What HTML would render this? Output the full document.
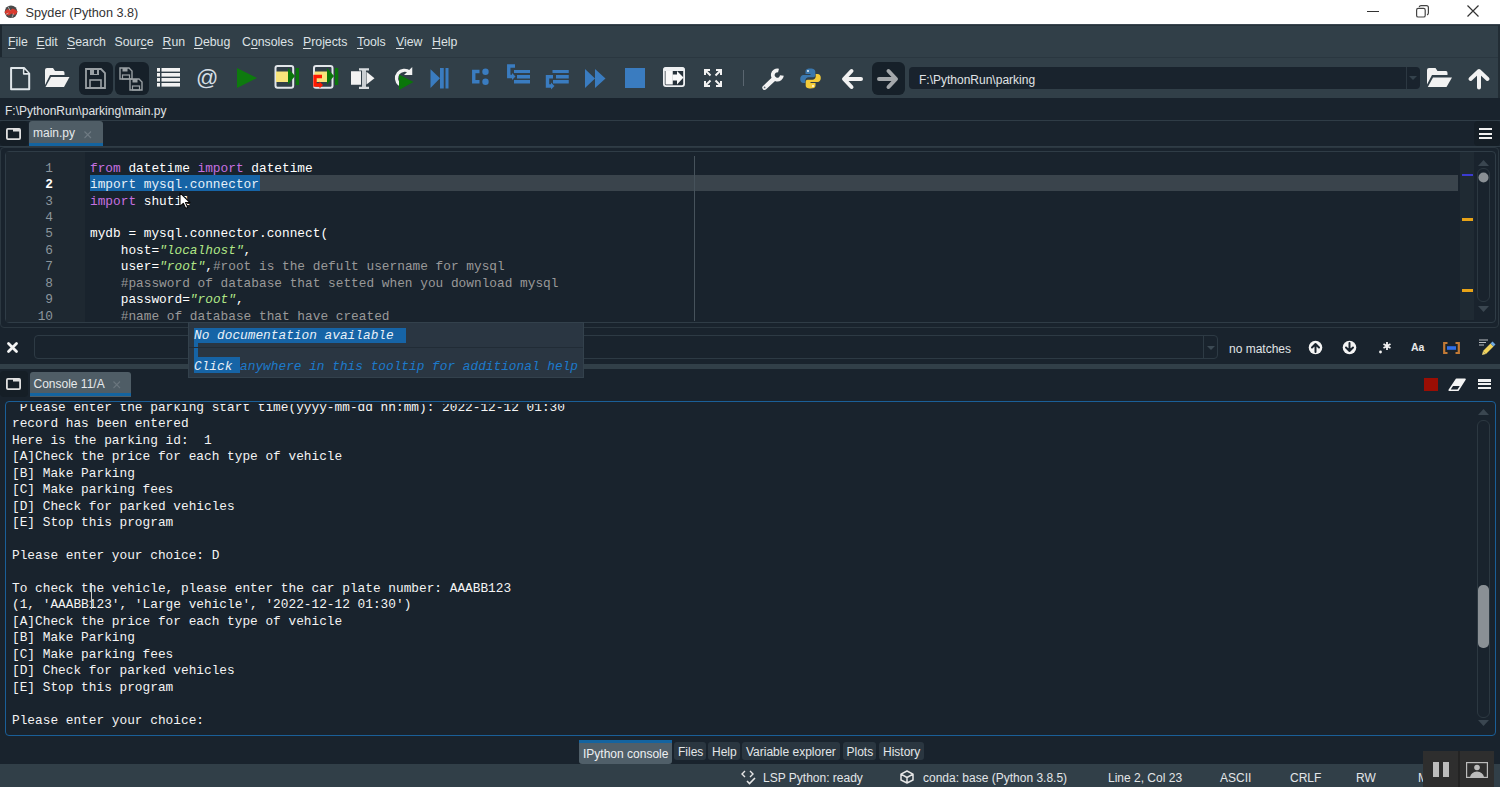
<!DOCTYPE html>
<html><head><meta charset="utf-8"><title>Spyder</title>
<style>
*{margin:0;padding:0;box-sizing:border-box}
html,body{width:1500px;height:787px;overflow:hidden;background:#19232D;font-family:"Liberation Sans",sans-serif;font-size:12px;color:#E8EAEC}
.a{position:absolute}
svg.a{overflow:visible}
.t{position:absolute;white-space:pre;line-height:1}
u{text-decoration:underline;text-underline-offset:1.5px;text-decoration-thickness:1px}
.kw{color:#C670E0}
.st{color:#B0E686;font-style:italic}
.cm{color:#999999}

</style></head><body>
<div class="a" style="left:0px;top:0px;width:1500px;height:25px;background:#fff"></div>
<div class="a" style="left:0px;top:24px;width:1500px;height:1px;background:#3a4650"></div>
<svg class="a" style="left:4px;top:4.5px" width="14" height="14" viewBox="0 0 14 14"><circle cx="7" cy="6.8" r="6.3" fill="#4a4a4a"/><path d="M0.5 7.5 Q1.5 4.5 4 4 L6 5.5 L8.5 3.5 Q12 4.5 13.6 6.5 Q12.5 9.5 10 10 L7.5 8.5 L5 10.5 Q2 10 0.5 7.5 Z" fill="#D93A2E"/><path d="M4 1.5 L6 5.5 M9.5 8.5 L8 12.5 M1.5 9.5 L4.5 8" stroke="#c8c8c8" stroke-width="0.7"/></svg>
<div class="t" style="left:25.5px;top:6.75px;font-size:12.7px;color:#333333;">Spyder (Python 3.8)</div>
<div class="a" style="left:1367px;top:11px;width:12px;height:1px;background:#333"></div>
<svg class="a" style="left:1416px;top:5px" width="13" height="13" viewBox="0 0 13 13"><rect x="0.6" y="3.4" width="8.6" height="8.6" rx="1.6" fill="none" stroke="#444" stroke-width="1.2"/><path d="M3.2 2.0 Q3.6 0.6 5 0.6 L10.4 0.6 Q12.4 0.6 12.4 2.6 L12.4 8 Q12.4 9.4 11 9.8" fill="none" stroke="#444" stroke-width="1.2"/></svg>
<svg class="a" style="left:1467px;top:5px" width="12" height="12" viewBox="0 0 12 12"><path d="M0.5 0.5 L11.5 11.5 M11.5 0.5 L0.5 11.5" stroke="#333" stroke-width="1.2"/></svg>
<div class="a" style="left:0px;top:25px;width:1500px;height:32px;background:#313F48"></div>
<div class="a" style="left:0px;top:25px;width:1500px;height:1px;background:#26323a"></div>
<div class="a" style="left:0px;top:25px;width:2px;height:32px;background:#1d2830"></div>
<div class="t" style="left:8px;top:35.59px;font-size:12.3px;color:#DDE2E5;"><u>F</u>ile</div>
<div class="t" style="left:36.5px;top:35.59px;font-size:12.3px;color:#DDE2E5;"><u>E</u>dit</div>
<div class="t" style="left:67px;top:35.59px;font-size:12.3px;color:#DDE2E5;"><u>S</u>earch</div>
<div class="t" style="left:114.5px;top:35.59px;font-size:12.3px;color:#DDE2E5;">Sour<u>c</u>e</div>
<div class="t" style="left:162.5px;top:35.59px;font-size:12.3px;color:#DDE2E5;"><u>R</u>un</div>
<div class="t" style="left:194px;top:35.59px;font-size:12.3px;color:#DDE2E5;"><u>D</u>ebug</div>
<div class="t" style="left:242px;top:35.59px;font-size:12.3px;color:#DDE2E5;">C<u>o</u>nsoles</div>
<div class="t" style="left:303px;top:35.59px;font-size:12.3px;color:#DDE2E5;"><u>P</u>rojects</div>
<div class="t" style="left:357px;top:35.59px;font-size:12.3px;color:#DDE2E5;"><u>T</u>ools</div>
<div class="t" style="left:396px;top:35.59px;font-size:12.3px;color:#DDE2E5;"><u>V</u>iew</div>
<div class="t" style="left:432px;top:35.59px;font-size:12.3px;color:#DDE2E5;"><u>H</u>elp</div>
<div class="a" style="left:0px;top:57px;width:1500px;height:41px;background:#313F48"></div>
<div class="a" style="left:0px;top:57px;width:1500px;height:1px;background:#2a3740"></div>
<svg class="a" style="left:9.5px;top:67px" width="21" height="24" viewBox="0 0 21 24"><path d="M1.1 1 L14 1 L19.2 6.6 L19.2 22.2 L1.1 22.2 Z" fill="none" stroke="#E0E6EA" stroke-width="2" stroke-linejoin="round"/><path d="M13.8 1.5 L13.8 6.8 L19 6.8" fill="none" stroke="#E0E6EA" stroke-width="1.8" stroke-linejoin="round"/><path d="M14.5 2.5 L14.5 6 L18 6 Z" fill="#1d2830"/></svg>
<svg class="a" style="left:45px;top:68px" width="25" height="20" viewBox="0 0 25 20"><path d="M0 2 Q0 0 2 0 L8 0 L10 3 L18 3 Q19.5 3 19.5 5 L19.5 7 L5 7 L0 17 Z" fill="#F2F2F2"/><path d="M6 9 L24.5 9 L19 19 L0.5 19 Z" fill="#F2F2F2"/></svg>
<div class="a" style="left:79px;top:62px;width:34px;height:33px;background:#162029;border-radius:6px"></div>
<svg class="a" style="left:85px;top:68px" width="21" height="21" viewBox="0 0 21 21"><path d="M1 1 L16 1 L20 5 L20 20 L1 20 Z" fill="none" stroke="#9aa0a4" stroke-width="1.8"/><rect x="5" y="1" width="9" height="6" fill="#9aa0a4"/><rect x="9" y="2" width="3" height="4" fill="#19232D"/><rect x="5" y="12" width="11" height="8" fill="none" stroke="#9aa0a4" stroke-width="1.6"/></svg>
<div class="a" style="left:115px;top:62px;width:34px;height:33px;background:#162029;border-radius:6px"></div>
<svg class="a" style="left:119px;top:67px" width="25" height="24" viewBox="0 0 25 24"><g fill="none" stroke="#9aa0a4" stroke-width="1.4"><path d="M1 1 L10 1 L13 4 L13 12 L1 12 Z"/><path d="M11 12 L20 12 L23 15 L23 23 L11 23 Z"/></g><rect x="3.5" y="1" width="5" height="3.5" fill="#9aa0a4"/><rect x="13.5" y="12" width="5" height="3.5" fill="#9aa0a4"/><rect x="3.5" y="8" width="7" height="4" fill="none" stroke="#9aa0a4" stroke-width="1.2"/><rect x="13.5" y="19" width="7" height="4" fill="none" stroke="#9aa0a4" stroke-width="1.2"/></svg>
<svg class="a" style="left:157px;top:68px" width="23" height="20" viewBox="0 0 23 20"><rect x="0" y="0" width="3" height="3.6" fill="#F2F2F2"/><rect x="4.5" y="0" width="18.5" height="3.6" fill="#F2F2F2"/><rect x="0" y="5" width="3" height="3.6" fill="#F2F2F2"/><rect x="4.5" y="5" width="18.5" height="3.6" fill="#F2F2F2"/><rect x="0" y="10" width="3" height="3.6" fill="#F2F2F2"/><rect x="4.5" y="10" width="18.5" height="3.6" fill="#F2F2F2"/><rect x="0" y="15" width="3" height="3.6" fill="#F2F2F2"/><rect x="4.5" y="15" width="18.5" height="3.6" fill="#F2F2F2"/></svg>
<div class="t" style="left:196px;top:67.13px;font-size:22px;color:#D6DEE4;font-weight:normal;letter-spacing:0">@</div>
<svg class="a" style="left:237px;top:68px" width="20" height="20" viewBox="0 0 20 20"><path d="M0 0 L20 10 L0 20 Z" fill="#0E7A0E"/></svg>
<svg class="a" style="left:274px;top:65px" width="27" height="25" viewBox="0 0 27 25"><rect x="1.5" y="1" width="17.7" height="21.75" rx="2" fill="none" stroke="#E2E6EA" stroke-width="2"/><rect x="2" y="6.5" width="12.5" height="10.5" fill="#F8E47A"/><path d="M14 3 L21 11 L14 19.5 Z" fill="#0A760A"/><rect x="21.75" y="3" width="3.25" height="17" fill="#0A760A"/></svg>
<svg class="a" style="left:312px;top:65px" width="28" height="25" viewBox="0 0 28 25"><rect x="2" y="1" width="18.5" height="21.75" rx="2" fill="none" stroke="#E2E6EA" stroke-width="2"/><rect x="2.5" y="6.5" width="12.5" height="10.5" fill="#F8E47A"/><path d="M15 3 L22 11 L15 19.5 Z" fill="#0A760A"/><rect x="23" y="3" width="3.25" height="17" fill="#0A760A"/><path d="M10 11.5 L3 11.5 L3 20 L8.5 20" fill="none" stroke="#FF1A00" stroke-width="3.4"/><path d="M7.5 16.5 L11 20 L7.5 23.5 Z" fill="#FF1A00"/></svg>
<svg class="a" style="left:351px;top:67px" width="25" height="23" viewBox="0 0 25 23"><rect x="0" y="4.25" width="10" height="13.5" fill="#F2F2F2"/><rect x="11" y="2" width="4" height="19" fill="#C9CED2"/><rect x="8" y="1.25" width="10" height="2.25" fill="#D9DDE0"/><rect x="8" y="19.75" width="10" height="2.25" fill="#D9DDE0"/><path d="M15.5 4.75 L23.5 11.25 L15.5 17.5 Z" fill="#F2F2F2"/></svg>
<svg class="a" style="left:391px;top:66px" width="24" height="25" viewBox="0 0 24 25"><path d="M18.5 6 A8 8 0 1 0 8.5 18.5" fill="none" stroke="#F2F2F2" stroke-width="3.2"/><path d="M21.25 1 L21.25 9 L13 9 Z" fill="#F2F2F2"/><path d="M8 8.5 L22.5 16 L8 24 Z" fill="#0A760A"/></svg>
<svg class="a" style="left:430px;top:68px" width="19" height="21" viewBox="0 0 19 21"><path d="M0.5 1.25 L10 10.25 L0.5 20 Z" fill="#3A7CC0"/><rect x="10" y="0" width="3.75" height="20.5" fill="#3A7CC0"/><rect x="15.5" y="0" width="3" height="20.5" fill="#3A7CC0"/></svg>
<svg class="a" style="left:472px;top:68px" width="17" height="17" viewBox="0 0 17 17"><path d="M7.5 3.5 L1.75 3.5 L1.75 13.75 L7.5 13.75" fill="none" stroke="#3A7CC0" stroke-width="3.4"/><circle cx="13.5" cy="3.75" r="3.2" fill="#3A7CC0"/><circle cx="13.5" cy="13.75" r="3.2" fill="#3A7CC0"/></svg>
<svg class="a" style="left:506px;top:64px" width="25" height="21" viewBox="0 0 25 21"><path d="M9 2 L2.75 2 L2.75 12.5 L6 12.5" fill="none" stroke="#3A7CC0" stroke-width="3.4"/><path d="M6 9 L9.5 12.5 L6 16 Z" fill="#3A7CC0"/><rect x="8" y="6" width="16" height="3" fill="#3A7CC0"/><rect x="11" y="11" width="13" height="3.5" fill="#3A7CC0"/><rect x="8" y="16" width="16" height="3.5" fill="#3A7CC0"/></svg>
<svg class="a" style="left:545px;top:69px" width="24" height="21" viewBox="0 0 24 21"><rect x="7.5" y="1" width="16.25" height="3" fill="#3A7CC0"/><rect x="11" y="6" width="12.75" height="3.5" fill="#3A7CC0"/><rect x="8" y="11" width="15.75" height="3.5" fill="#3A7CC0"/><path d="M8 7.75 L2.5 7.75 L2.5 17 L6 17" fill="none" stroke="#3A7CC0" stroke-width="3.4"/><path d="M6 13.5 L9.5 17 L6 20.5 Z" fill="#3A7CC0"/></svg>
<svg class="a" style="left:585px;top:69px" width="21" height="19" viewBox="0 0 21 19"><path d="M0 0 L10 9.5 L0 19 Z M10 0 L20.5 9.5 L10 19 Z" fill="#3A7CC0"/></svg>
<div class="a" style="left:625px;top:68px;width:20px;height:20px;background:#3A7CC0"></div>
<svg class="a" style="left:663px;top:67px" width="22" height="20" viewBox="0 0 22 20"><rect x="0.9" y="0.9" width="20.2" height="18.2" rx="2" fill="#26313A" stroke="#EEF0F2" stroke-width="1.8"/><rect x="0.5" y="0.5" width="21" height="3.5" rx="1.5" fill="#EEF0F2"/><rect x="2.5" y="4" width="7.25" height="13.5" fill="#FAFAFA"/><rect x="9.5" y="7.5" width="5" height="6" fill="#FAFAFA"/><path d="M14 4 L20.5 10.5 L14 17.5 Z" fill="#FAFAFA"/></svg>
<svg class="a" style="left:704px;top:69px" width="18" height="18" viewBox="0 0 18 18"><g stroke="#F2F2F2" stroke-width="2" fill="none"><path d="M1 6 L1 1 L6 1 M1 1 L6.5 6.5"/><path d="M12 1 L17 1 L17 6 M17 1 L11.5 6.5"/><path d="M1 12 L1 17 L6 17 M1 17 L6.5 11.5"/><path d="M17 12 L17 17 L12 17 M17 17 L11.5 11.5"/></g></svg>
<div class="a" style="left:742.5px;top:70px;width:1px;height:16px;background:#5a6670"></div>
<svg class="a" style="left:761px;top:68px" width="23" height="23" viewBox="0 0 23 23"><path d="M3.6 19.6 L13 10.8" stroke="#F2F2F2" stroke-width="4.6" stroke-linecap="round"/><path d="M20.9 7.6 A4.6 4.6 0 1 1 17.5 2.6" fill="none" stroke="#F2F2F2" stroke-width="3.8"/><circle cx="3.6" cy="19.4" r="0.9" fill="#5a6670"/></svg>
<svg class="a" style="left:800px;top:68px" width="21" height="21" viewBox="0 0 21 21"><path d="M10.3 0.5 C6 0.5 5.5 2.3 5.5 3.7 L5.5 6 L10.5 6 L10.5 7 L3.5 7 C1.5 7 0.2 8.8 0.2 11 C0.2 13.4 1.5 15 3.5 15 L5.3 15 L5.3 12.5 C5.3 10.6 6.8 9.2 8.6 9.2 L13.4 9.2 C15 9.2 15.3 8 15.3 6.6 L15.3 3.6 C15.3 2 14 0.5 10.3 0.5 Z" fill="#3B77AD"/><path d="M10.7 20.5 C15 20.5 15.5 18.7 15.5 17.3 L15.5 15 L10.5 15 L10.5 14 L17.5 14 C19.5 14 20.8 12.2 20.8 10 C20.8 7.6 19.5 6 17.5 6 L15.7 6 L15.7 8.5 C15.7 10.4 14.2 11.8 12.4 11.8 L7.6 11.8 C6 11.8 5.7 13 5.7 14.4 L5.7 17.4 C5.7 19 7 20.5 10.7 20.5 Z" fill="#F4CC3A"/><circle cx="8" cy="3" r="0.9" fill="#fff"/><circle cx="13" cy="18" r="0.9" fill="#fff"/></svg>
<svg class="a" style="left:842px;top:69px" width="20" height="20" viewBox="0 0 20 20"><path d="M9.5 2 L2 10 L9.5 18 M2.5 10 L19 10" fill="none" stroke="#F2F2F2" stroke-width="4" stroke-linecap="round" stroke-linejoin="round"/></svg>
<div class="a" style="left:872px;top:62px;width:33px;height:33px;background:#162029;border-radius:6px"></div>
<svg class="a" style="left:878px;top:69px" width="20" height="20" viewBox="0 0 20 20"><path d="M10.5 2 L18 10 L10.5 18 M17.5 10 L1 10" fill="none" stroke="#a4a8ab" stroke-width="4" stroke-linecap="round" stroke-linejoin="round"/></svg>
<div class="a" style="left:909px;top:67px;width:511px;height:22px;background:#19232D;border-radius:4px"></div>
<div class="a" style="left:1406px;top:67px;width:1px;height:22px;background:#2c3842"></div>
<svg class="a" style="left:1409px;top:76px" width="8" height="4" viewBox="0 0 8 4"><path d="M0 0 L8 0 L4 4 Z" fill="#34424c"/></svg>
<div class="t" style="left:919px;top:73.64px;font-size:12px;color:#E0E3E6;">F:\PythonRun\parking</div>
<svg class="a" style="left:1427px;top:68px" width="26" height="20" viewBox="0 0 26 20"><path d="M0 2 Q0 0 2 0 L8.5 0 L10.5 3 L19 3 Q20.5 3 20.5 5 L20.5 7 L5 7 L0 16.5 Z" fill="#F2F2F2"/><path d="M6 9.5 L25 9.5 L19.5 19 L0.8 19 Z" fill="#F2F2F2"/></svg>
<svg class="a" style="left:1468px;top:69px" width="22" height="20" viewBox="0 0 22 20"><path d="M2.5 10 L11 2 L19.5 10 M11 2.5 L11 18.5" fill="none" stroke="#F2F2F2" stroke-width="4" stroke-linecap="round" stroke-linejoin="round"/></svg>
<div class="a" style="left:1498px;top:25px;width:2px;height:73px;background:#222d35"></div>
<div class="a" style="left:0px;top:98px;width:1500px;height:23px;background:#19232D"></div>
<div class="t" style="left:5px;top:104.54px;font-size:12px;color:#E0E3E6;">F:\PythonRun\parking\main.py</div>
<div class="a" style="left:0px;top:120px;width:1500px;height:1px;background:#2F3C46"></div>
<div class="a" style="left:0px;top:121px;width:28px;height:25px;background:#151E26;border-radius:4px"></div>
<svg class="a" style="left:6px;top:128px" width="15" height="12" viewBox="0 0 15 12"><rect x="0.9" y="0.9" width="13.2" height="10.2" rx="1" fill="none" stroke="#E0E0E0" stroke-width="1.8"/><rect x="7" y="0.9" width="7" height="2.6" fill="#E0E0E0"/></svg>
<div class="a" style="left:29px;top:121px;width:73.5px;height:25px;background:#4F5D66;border-top-left-radius:3px;border-top-right-radius:3px"></div>
<div class="a" style="left:29px;top:142.5px;width:73.5px;height:3.5px;background:#1464A0"></div>
<div class="t" style="left:33px;top:127.34px;font-size:12px;color:#E6E9EB;">main.py</div>
<svg class="a" style="left:84px;top:130.5px" width="7.5" height="7.5" viewBox="0 0 7.5 7.5"><path d="M0.5 0.5 L7 7 M7 0.5 L0.5 7" stroke="#6f7b83" stroke-width="1.1"/></svg>
<div class="a" style="left:0px;top:146px;width:1500px;height:1px;background:#2F3C46"></div>
<div class="a" style="left:1474px;top:121px;width:26px;height:25px;background:#151E26;border-radius:4px"></div>
<div class="a" style="left:1479px;top:128px;width:13px;height:2.2px;background:#F0F0F0"></div>
<div class="a" style="left:1479px;top:132.5px;width:13px;height:2.2px;background:#F0F0F0"></div>
<div class="a" style="left:1479px;top:137px;width:13px;height:2.2px;background:#F0F0F0"></div>
<div class="a" style="left:0px;top:147px;width:1499px;height:181px;border:1px solid #2B3740;border-radius:4px"></div>
<div class="a" style="left:5px;top:151px;width:1491px;height:172px;border:1px solid #2F3C46;border-radius:4px;background:#19232D"></div>
<div class="a" style="left:6px;top:152px;width:79px;height:170px;background:#1E2831"></div>
<div class="a" style="left:90px;top:175px;width:1368px;height:16px;background:#3A444C"></div>
<div class="a" style="left:90px;top:175px;width:170px;height:16px;background:#1664A6"></div>
<div class="a" style="left:694px;top:156px;width:1px;height:165px;background:#46525B"></div>
<div class="a" style="left:0;top:152px;width:1460px;height:170px;overflow:hidden">
<div class="t" style="left:90px;top:10.69px;font-family:'Liberation Mono',monospace;font-size:12.8px;color:#fff"><span class="kw">from</span> datetime <span class="kw">import</span> datetime</div>
<div class="t" style="left:45.32px;top:10.69px;font-family:'Liberation Mono',monospace;font-size:12.8px;color:#8C969D;">1</div>
<div class="t" style="left:90px;top:27.14px;font-family:'Liberation Mono',monospace;font-size:12.8px;color:#E6F0F8">import mysql.connector</div>
<div class="t" style="left:45.32px;top:27.14px;font-family:'Liberation Mono',monospace;font-size:12.8px;color:#FFFFFF;font-weight:bold;">2</div>
<div class="t" style="left:90px;top:43.59px;font-family:'Liberation Mono',monospace;font-size:12.8px;color:#fff"><span class="kw">import</span> shutil</div>
<div class="t" style="left:45.32px;top:43.59px;font-family:'Liberation Mono',monospace;font-size:12.8px;color:#8C969D;">3</div>
<div class="t" style="left:90px;top:60.04px;font-family:'Liberation Mono',monospace;font-size:12.8px;color:#fff"></div>
<div class="t" style="left:45.32px;top:60.04px;font-family:'Liberation Mono',monospace;font-size:12.8px;color:#8C969D;">4</div>
<div class="t" style="left:90px;top:76.49px;font-family:'Liberation Mono',monospace;font-size:12.8px;color:#fff">mydb = mysql.connector.connect(</div>
<div class="t" style="left:45.32px;top:76.49px;font-family:'Liberation Mono',monospace;font-size:12.8px;color:#8C969D;">5</div>
<div class="t" style="left:90px;top:92.94px;font-family:'Liberation Mono',monospace;font-size:12.8px;color:#fff">    host=<span class="st">"localhost"</span>,</div>
<div class="t" style="left:45.32px;top:92.94px;font-family:'Liberation Mono',monospace;font-size:12.8px;color:#8C969D;">6</div>
<div class="t" style="left:90px;top:109.39px;font-family:'Liberation Mono',monospace;font-size:12.8px;color:#fff">    user=<span class="st">"root"</span>,<span class="cm">#root is the defult username for mysql</span></div>
<div class="t" style="left:45.32px;top:109.39px;font-family:'Liberation Mono',monospace;font-size:12.8px;color:#8C969D;">7</div>
<div class="t" style="left:90px;top:125.84px;font-family:'Liberation Mono',monospace;font-size:12.8px;color:#fff">    <span class="cm">#password of database that setted when you download mysql</span></div>
<div class="t" style="left:45.32px;top:125.84px;font-family:'Liberation Mono',monospace;font-size:12.8px;color:#8C969D;">8</div>
<div class="t" style="left:90px;top:142.29px;font-family:'Liberation Mono',monospace;font-size:12.8px;color:#fff">    password=<span class="st">"root"</span>,</div>
<div class="t" style="left:45.32px;top:142.29px;font-family:'Liberation Mono',monospace;font-size:12.8px;color:#8C969D;">9</div>
<div class="t" style="left:90px;top:158.74px;font-family:'Liberation Mono',monospace;font-size:12.8px;color:#fff">    <span class="cm">#name of database that have created</span></div>
<div class="t" style="left:37.64px;top:158.74px;font-family:'Liberation Mono',monospace;font-size:12.8px;color:#8C969D;">10</div>
</div>
<svg class="a" style="left:178.5px;top:192px" width="13" height="18" viewBox="0 0 13 18"><path d="M1 0.8 L1 14.3 L4.3 11.3 L6.6 16.3 L8.8 15.4 L6.5 10.5 L11 10.5 Z" fill="#fff" stroke="#0a0a0a" stroke-width="1.1" stroke-linejoin="round"/></svg>
<div class="a" style="left:1460px;top:152px;width:14px;height:168px;background:#1F2A33"></div>
<div class="a" style="left:1462px;top:173.5px;width:11px;height:2.5px;background:#3B3BD0"></div>
<div class="a" style="left:1462px;top:217.5px;width:11px;height:3px;background:#E8A317"></div>
<div class="a" style="left:1462px;top:288.5px;width:11px;height:3px;background:#E8A317"></div>
<svg class="a" style="left:1478px;top:160px" width="11" height="7" viewBox="0 0 11 7"><path d="M0 6 L5.5 0 L11 6 Z" fill="#3A4650"/></svg>
<div class="a" style="left:1477px;top:168px;width:13px;height:134px;border:1px solid #2C3841;border-radius:6px"></div>
<svg class="a" style="left:1478px;top:172px" width="11" height="11" viewBox="0 0 11 11"><circle cx="5.5" cy="5.5" r="5" fill="#8A9095"/></svg>
<svg class="a" style="left:1478px;top:306px" width="11" height="7" viewBox="0 0 11 7"><path d="M0 0 L11 0 L5.5 6 Z" fill="#3A4650"/></svg>
<div class="a" style="left:0px;top:328px;width:1500px;height:36px;background:#19232D"></div>
<svg class="a" style="left:7px;top:342px" width="11" height="11" viewBox="0 0 11 11"><path d="M1.5 1.5 L9.5 9.5 M9.5 1.5 L1.5 9.5" stroke="#F4F4F4" stroke-width="2.8" stroke-linecap="round"/></svg>
<div class="a" style="left:34px;top:335px;width:1184px;height:24px;border:1px solid #2D3A44;border-radius:4px"></div>
<div class="a" style="left:1203px;top:336px;width:1px;height:22px;background:#2D3A44"></div>
<svg class="a" style="left:1207px;top:346px" width="8" height="4" viewBox="0 0 8 4"><path d="M0 0 L8 0 L4 4 Z" fill="#3c4a54"/></svg>
<div class="t" style="left:1229px;top:342.54px;font-size:12px;color:#E0E3E6;">no matches</div>
<svg class="a" style="left:1308.2px;top:339.5px" width="15" height="15" viewBox="0 0 15 15"><circle cx="7.5" cy="7.5" r="6.8" fill="#F4F4F4"/><path d="M7.5 12 L7.5 4 M4 7.5 L7.5 4 L11 7.5" stroke="#19232D" stroke-width="2" fill="none" stroke-linecap="round" stroke-linejoin="round"/></svg>
<svg class="a" style="left:1341.8px;top:339.5px" width="15" height="15" viewBox="0 0 15 15"><circle cx="7.5" cy="7.5" r="6.8" fill="#F4F4F4"/><path d="M7.5 3 L7.5 11 M4 7.5 L7.5 11 L11 7.5" stroke="#19232D" stroke-width="2" fill="none" stroke-linecap="round" stroke-linejoin="round"/></svg>
<svg class="a" style="left:1378.5px;top:341px" width="13" height="13" viewBox="0 0 13 13"><circle cx="1.5" cy="11" r="1.4" fill="#F4F4F4"/><path d="M8 1 L8 9 M4.5 3 L11.5 7 M11.5 3 L4.5 7" stroke="#F4F4F4" stroke-width="1.8"/></svg>
<div class="t" style="left:1411px;top:342.11px;font-size:10.5px;color:#E8E8E8;font-weight:bold">Aa</div>
<svg class="a" style="left:1443px;top:341.5px" width="17" height="12" viewBox="0 0 17 12"><path d="M4.5 1 L1.2 1 L1.2 11 L4.5 11 M12.5 1 L15.8 1 L15.8 11 L12.5 11" fill="none" stroke="#C27A35" stroke-width="2.2"/><rect x="4" y="4.2" width="9" height="3.6" fill="#2F6FE8"/></svg>
<svg class="a" style="left:1478px;top:339px" width="18" height="17" viewBox="0 0 18 17"><path d="M1 1 L10 1 M1 3.5 L8 3.5 M1 6 L6 6" stroke="#b8bcc0" stroke-width="1"/><path d="M5 12 L12.5 4.5 L15.5 7.5 L8 15 Z" fill="#F2D35A"/><path d="M12.5 4.5 L14.5 2.5 L17.5 5.5 L15.5 7.5 Z" fill="#6FA8E0"/><path d="M5 12 L4 16 L8 15 Z" fill="#E8D070"/></svg>
<div class="a" style="left:0px;top:364px;width:1500px;height:5px;background:#313F48"></div>
<div class="a" style="left:0px;top:369px;width:1500px;height:33px;background:#19232D"></div>
<div class="a" style="left:0px;top:371px;width:28px;height:26px;background:#151E26;border-radius:4px"></div>
<svg class="a" style="left:6px;top:378px" width="15" height="12" viewBox="0 0 15 12"><rect x="0.9" y="0.9" width="13.2" height="10.2" rx="1" fill="none" stroke="#E0E0E0" stroke-width="1.8"/><rect x="7" y="0.9" width="7" height="2.6" fill="#E0E0E0"/></svg>
<div class="a" style="left:30px;top:372px;width:101px;height:25px;background:#4F5D66;border-top-left-radius:3px;border-top-right-radius:3px"></div>
<div class="a" style="left:30px;top:393px;width:101px;height:3px;background:#1464A0"></div>
<div class="t" style="left:33.5px;top:377.84px;font-size:12px;color:#E6E9EB;">Console 11/A</div>
<svg class="a" style="left:112.5px;top:381px" width="7.5" height="7.5" viewBox="0 0 7.5 7.5"><path d="M0.5 0.5 L7 7 M7 0.5 L0.5 7" stroke="#6a767e" stroke-width="1.1"/></svg>
<div class="a" style="left:1424px;top:378px;width:14px;height:13px;background:#9A0E04"></div>
<svg class="a" style="left:1448px;top:378px" width="18" height="13" viewBox="0 0 18 13"><path d="M8.5 1.2 L17 1.2 L10 12.2 L1.2 12.2 Z" fill="none" stroke="#F4F4F4" stroke-width="1.6" stroke-linejoin="round"/><path d="M8.5 1.2 L17 1.2 L12.5 8 L4 8 Z" fill="#F4F4F4"/></svg>
<div class="a" style="left:1478px;top:379.4px;width:13px;height:2.2px;background:#F0F0F0"></div>
<div class="a" style="left:1478px;top:383.3px;width:13px;height:2.2px;background:#F0F0F0"></div>
<div class="a" style="left:1478px;top:387px;width:13px;height:2.2px;background:#F0F0F0"></div>
<div class="a" style="left:5px;top:401px;width:1491px;height:335px;border:1px solid #1A5F98;border-radius:4px;background:#19232D"></div>
<div class="a" style="left:6px;top:404px;width:1470px;height:330px;overflow:hidden">
<div class="t" style="left:6px;top:-2.31px;font-family:'Liberation Mono',monospace;font-size:12.8px;color:#F4F4F4"> Please enter the parking start time(yyyy-mm-dd hh:mm): 2022-12-12 01:30</div>
<div class="t" style="left:6px;top:14.16px;font-family:'Liberation Mono',monospace;font-size:12.8px;color:#F4F4F4">record has been entered</div>
<div class="t" style="left:6px;top:30.63px;font-family:'Liberation Mono',monospace;font-size:12.8px;color:#F4F4F4">Here is the parking id:  1</div>
<div class="t" style="left:6px;top:47.10px;font-family:'Liberation Mono',monospace;font-size:12.8px;color:#F4F4F4">[A]Check the price for each type of vehicle</div>
<div class="t" style="left:6px;top:63.57px;font-family:'Liberation Mono',monospace;font-size:12.8px;color:#F4F4F4">[B] Make Parking</div>
<div class="t" style="left:6px;top:80.04px;font-family:'Liberation Mono',monospace;font-size:12.8px;color:#F4F4F4">[C] Make parking fees</div>
<div class="t" style="left:6px;top:96.51px;font-family:'Liberation Mono',monospace;font-size:12.8px;color:#F4F4F4">[D] Check for parked vehicles</div>
<div class="t" style="left:6px;top:112.98px;font-family:'Liberation Mono',monospace;font-size:12.8px;color:#F4F4F4">[E] Stop this program</div>
<div class="t" style="left:6px;top:129.45px;font-family:'Liberation Mono',monospace;font-size:12.8px;color:#F4F4F4"></div>
<div class="t" style="left:6px;top:145.92px;font-family:'Liberation Mono',monospace;font-size:12.8px;color:#F4F4F4">Please enter your choice: D</div>
<div class="t" style="left:6px;top:162.39px;font-family:'Liberation Mono',monospace;font-size:12.8px;color:#F4F4F4"></div>
<div class="t" style="left:6px;top:178.86px;font-family:'Liberation Mono',monospace;font-size:12.8px;color:#F4F4F4">To check the vehicle, please enter the car plate number: AAABB123</div>
<div class="t" style="left:6px;top:195.33px;font-family:'Liberation Mono',monospace;font-size:12.8px;color:#F4F4F4">(1, &#x27;AAABB123&#x27;, &#x27;Large vehicle&#x27;, &#x27;2022-12-12 01:30&#x27;)</div>
<div class="t" style="left:6px;top:211.80px;font-family:'Liberation Mono',monospace;font-size:12.8px;color:#F4F4F4">[A]Check the price for each type of vehicle</div>
<div class="t" style="left:6px;top:228.27px;font-family:'Liberation Mono',monospace;font-size:12.8px;color:#F4F4F4">[B] Make Parking</div>
<div class="t" style="left:6px;top:244.74px;font-family:'Liberation Mono',monospace;font-size:12.8px;color:#F4F4F4">[C] Make parking fees</div>
<div class="t" style="left:6px;top:261.21px;font-family:'Liberation Mono',monospace;font-size:12.8px;color:#F4F4F4">[D] Check for parked vehicles</div>
<div class="t" style="left:6px;top:277.68px;font-family:'Liberation Mono',monospace;font-size:12.8px;color:#F4F4F4">[E] Stop this program</div>
<div class="t" style="left:6px;top:294.15px;font-family:'Liberation Mono',monospace;font-size:12.8px;color:#F4F4F4"></div>
<div class="t" style="left:6px;top:310.62px;font-family:'Liberation Mono',monospace;font-size:12.8px;color:#F4F4F4">Please enter your choice: </div>
</div>
<div class="a" style="left:91px;top:583px;width:1px;height:26px;background:#c8c8c8"></div>
<svg class="a" style="left:1478px;top:409px" width="11" height="7" viewBox="0 0 11 7"><path d="M0 6 L5.5 0 L11 6 Z" fill="#3A4650"/></svg>
<div class="a" style="left:1477px;top:420px;width:13px;height:298px;border:1px solid #2C3841;border-radius:6px"></div>
<div class="a" style="left:1478px;top:585px;width:11px;height:63px;background:#8A9095;border-radius:5px"></div>
<svg class="a" style="left:1478px;top:720px" width="11" height="7" viewBox="0 0 11 7"><path d="M0 0 L11 0 L5.5 6 Z" fill="#3A4650"/></svg>
<div class="a" style="left:0px;top:736px;width:1500px;height:28px;background:#19232D"></div>
<div class="a" style="left:579px;top:740px;width:93px;height:24px;background:#505F69;border-bottom-left-radius:3px;border-bottom-right-radius:3px"></div>
<div class="a" style="left:579px;top:740px;width:93px;height:3px;background:#1464A0"></div>
<div class="t" style="left:583px;top:747.84px;font-size:12px;color:#EEF0F2;">IPython console</div>
<div class="a" style="left:674px;top:742px;width:32px;height:18px;background:#2A3640;border-radius:3px"></div>
<div class="t" style="left:678px;top:745.84px;font-size:12px;color:#E3E6E8;">Files</div>
<div class="a" style="left:708px;top:742px;width:32px;height:18px;background:#2A3640;border-radius:3px"></div>
<div class="t" style="left:712px;top:745.84px;font-size:12px;color:#E3E6E8;">Help</div>
<div class="a" style="left:742px;top:742px;width:98px;height:18px;background:#2A3640;border-radius:3px"></div>
<div class="t" style="left:746px;top:745.84px;font-size:12px;color:#E3E6E8;">Variable explorer</div>
<div class="a" style="left:842.5px;top:742px;width:33.5px;height:18px;background:#2A3640;border-radius:3px"></div>
<div class="t" style="left:846.5px;top:745.84px;font-size:12px;color:#E3E6E8;">Plots</div>
<div class="a" style="left:879px;top:742px;width:45px;height:18px;background:#2A3640;border-radius:3px"></div>
<div class="t" style="left:883px;top:745.84px;font-size:12px;color:#E3E6E8;">History</div>
<div class="a" style="left:0px;top:764px;width:1500px;height:23px;background:#313F48"></div>
<svg class="a" style="left:741px;top:770px" width="15" height="15" viewBox="0 0 15 15"><path d="M4 1 L1 4 L4 7 M9 1 L12 4 L9 7" fill="none" stroke="#E6E6E6" stroke-width="1.4"/><path d="M6 11 L8.5 13.5 L14 8" fill="none" stroke="#E6E6E6" stroke-width="1.6"/></svg>
<div class="t" style="left:763px;top:771.54px;font-size:12px;color:#E3E6E8;">LSP Python: ready</div>
<svg class="a" style="left:900px;top:770px" width="14" height="14" viewBox="0 0 14 14"><path d="M7 1 L13 4.2 L13 10 L7 13 L1 10 L1 4.2 Z M1 4.2 L7 7.5 L13 4.2 M7 7.5 L7 13" fill="none" stroke="#E6E6E6" stroke-width="1.5" stroke-linejoin="round"/></svg>
<div class="t" style="left:923px;top:771.54px;font-size:12px;color:#E3E6E8;">conda: base (Python 3.8.5)</div>
<div class="t" style="left:1108px;top:771.54px;font-size:12px;color:#E3E6E8;">Line 2, Col 23</div>
<div class="t" style="left:1220px;top:771.54px;font-size:12px;color:#E3E6E8;">ASCII</div>
<div class="t" style="left:1290px;top:771.54px;font-size:12px;color:#E3E6E8;">CRLF</div>
<div class="t" style="left:1356px;top:771.54px;font-size:12px;color:#E3E6E8;">RW</div>
<div class="t" style="left:1418px;top:771.54px;font-size:12px;color:#E3E6E8;">M</div>
<div class="a" style="left:1423px;top:751px;width:71px;height:36px;background:#2E2E2E"></div>
<div class="a" style="left:1458px;top:751px;width:1.5px;height:36px;background:#232323"></div>
<div class="a" style="left:1433px;top:762px;width:5.5px;height:15px;background:#BDBDBD"></div>
<div class="a" style="left:1443px;top:762px;width:5.5px;height:15px;background:#BDBDBD"></div>
<svg class="a" style="left:1466px;top:762px" width="22" height="16" viewBox="0 0 22 16"><rect x="0.6" y="0.6" width="20.8" height="14.8" fill="none" stroke="#BBBBBB" stroke-width="1.2"/><circle cx="11" cy="5.5" r="2.8" fill="#BBBBBB"/><path d="M4 15 Q5 10 11 9.5 Q17 10 18 15 Z" fill="#BBBBBB"/></svg>
<div class="a" style="left:1494px;top:764px;width:6px;height:23px;background:#313F48"></div>
<div class="a" style="left:188px;top:322px;width:396px;height:56px;background:#2A3642;border:1px solid #33414C"></div>
<div class="a" style="left:194px;top:327.5px;width:212px;height:15.5px;background:#1664A6"></div>
<div class="a" style="left:194px;top:343px;width:4px;height:14px;background:#1664A6"></div>
<div class="a" style="left:189px;top:346.5px;width:394px;height:1.5px;background:#212C36"></div>
<div class="a" style="left:194px;top:357px;width:46px;height:15.5px;background:#1664A6"></div>
<div class="t" style="left:194px;top:329.69px;font-size:12.8px;font-family:'Liberation Mono',monospace;color:#E8F0F8;font-style:italic">No documentation available</div>
<div class="t" style="left:194px;top:360.69px;font-size:12.8px;font-family:'Liberation Mono',monospace;color:#E8F0F8;font-style:italic">Click <span style="color:#1D7ACB">anywhere in this tooltip for additional help</span></div>
</body></html>
